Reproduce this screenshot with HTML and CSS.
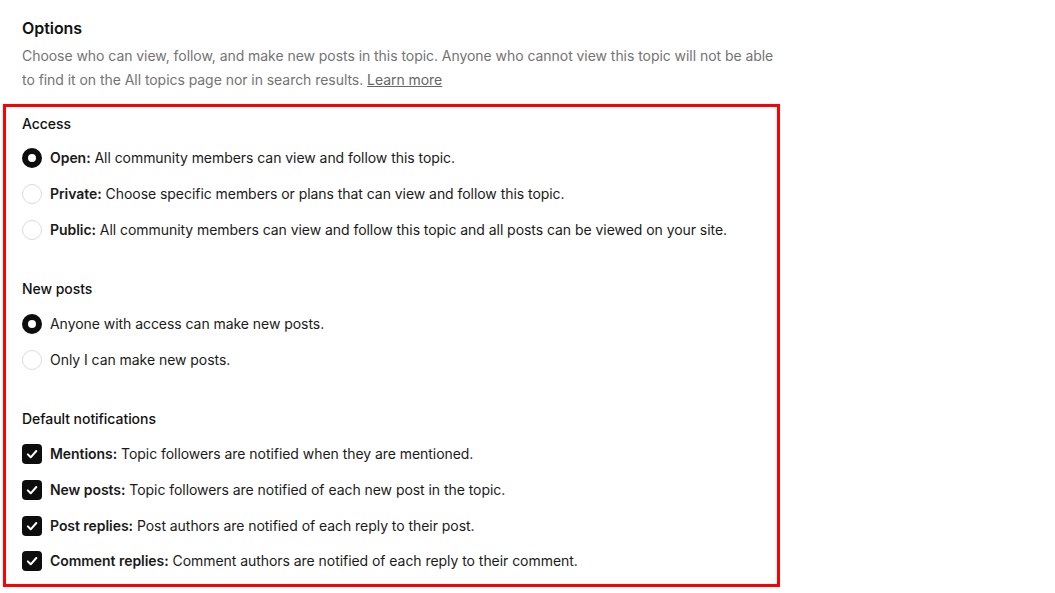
FILE: index.html
```html
<!DOCTYPE html>
<html>
<head>
    <title>Topic options</title>
    <link rel="stylesheet" href="styles.css">
</head>
<body>
    <div class="page">
        <div class="intro">
            <h2>Options</h2>
            <p>Choose who can view, follow, and make new posts in this topic. Anyone who cannot view this topic will not be able to find it on the All topics page nor in search results. <a href="#">Learn more</a></p>
        </div>

        <div class="options">
            <div class="group access">
                <div class="group-title">Access</div>
                <label class="row"><span class="radio checked"></span><span><b>Open:</b> All community members can view and follow this topic.</span></label>
                <label class="row"><span class="radio"></span><span><b>Private:</b> Choose specific members or plans that can view and follow this topic.</span></label>
                <label class="row"><span class="radio"></span><span><b>Public:</b> All community members can view and follow this topic and all posts can be viewed on your site.</span></label>
            </div>

            <div class="group">
                <div class="group-title">New posts</div>
                <label class="row"><span class="radio checked"></span><span>Anyone with access can make new posts.</span></label>
                <label class="row"><span class="radio"></span><span>Only I can make new posts.</span></label>
            </div>

            <div class="group notifications">
                <div class="group-title">Default notifications</div>
                <label class="row"><span class="check"><svg viewBox="0 0 20 20"><path d="M5.8 10.4l2.9 2.9L14.3 7"/></svg></span><span><b>Mentions:</b> Topic followers are notified when they are mentioned.</span></label>
                <label class="row"><span class="check"><svg viewBox="0 0 20 20"><path d="M5.8 10.4l2.9 2.9L14.3 7"/></svg></span><span><b>New posts:</b> Topic followers are notified of each new post in the topic.</span></label>
                <label class="row"><span class="check"><svg viewBox="0 0 20 20"><path d="M5.8 10.4l2.9 2.9L14.3 7"/></svg></span><span><b>Post replies:</b> Post authors are notified of each reply to their post.</span></label>
                <label class="row"><span class="check"><svg viewBox="0 0 20 20"><path d="M5.8 10.4l2.9 2.9L14.3 7"/></svg></span><span><b>Comment replies:</b> Comment authors are notified of each reply to their comment.</span></label>
            </div>
        </div>
    </div>
</body>
</html>
```

FILE: styles.css
```css
body {
    margin: 0;
    font-family: Inter, "Noto Sans", sans-serif;
    letter-spacing: -0.05px;
    color: #191919;
    background-color: white;
}

.page {
    width: 777px;
    padding: 16px 0 0 3px;
}

.intro {
    padding: 0 19px;
    margin-bottom: 12px;
}

h2 {
    margin: 0 0 4px;
    font-size: 16px;
    line-height: 24px;
    font-weight: 600;
    color: #111;
}

.intro p {
    margin: 0 -14px 0 0;
    font-size: 14px;
    line-height: 24px;
    color: #737373;
}

.intro a {
    color: #666;
    text-decoration: underline;
}

.options {
    border: 3px solid #ff0000;
    padding: 7px 16px 11px;
    display: flex;
    flex-direction: column;
}

.group {
    display: flex;
    flex-direction: column;
    gap: 12px;
    margin-top: 37px;
}

.group.access {
    margin-top: 0;
}

.group.notifications {
    gap: 11.7px;
}

.group-title {
    font-size: 14px;
    line-height: 20px;
    font-weight: 500;
    color: #111;
    margin-bottom: 1px;
}

.group.access .group-title {
    margin-bottom: 0;
}

.group.notifications .group-title {
    margin-bottom: 1.5px;
}

.row {
    display: flex;
    align-items: center;
    gap: 8px;
    font-size: 14px;
    line-height: 24px;
    color: #1a1a1a;
}

.row b {
    font-weight: 600;
}

.radio {
    width: 20px;
    height: 20px;
    box-sizing: border-box;
    border-radius: 50%;
    border: 1px solid #dcdcdc;
    flex-shrink: 0;
}

.radio.checked {
    border: 6px solid #0d0d0d;
}

.check {
    width: 20px;
    height: 20px;
    border-radius: 4px;
    background-color: #0d0d0d;
    flex-shrink: 0;
}

.check svg {
    display: block;
    width: 20px;
    height: 20px;
    fill: none;
    stroke: white;
    stroke-width: 2;
    stroke-linecap: round;
    stroke-linejoin: round;
}
```
